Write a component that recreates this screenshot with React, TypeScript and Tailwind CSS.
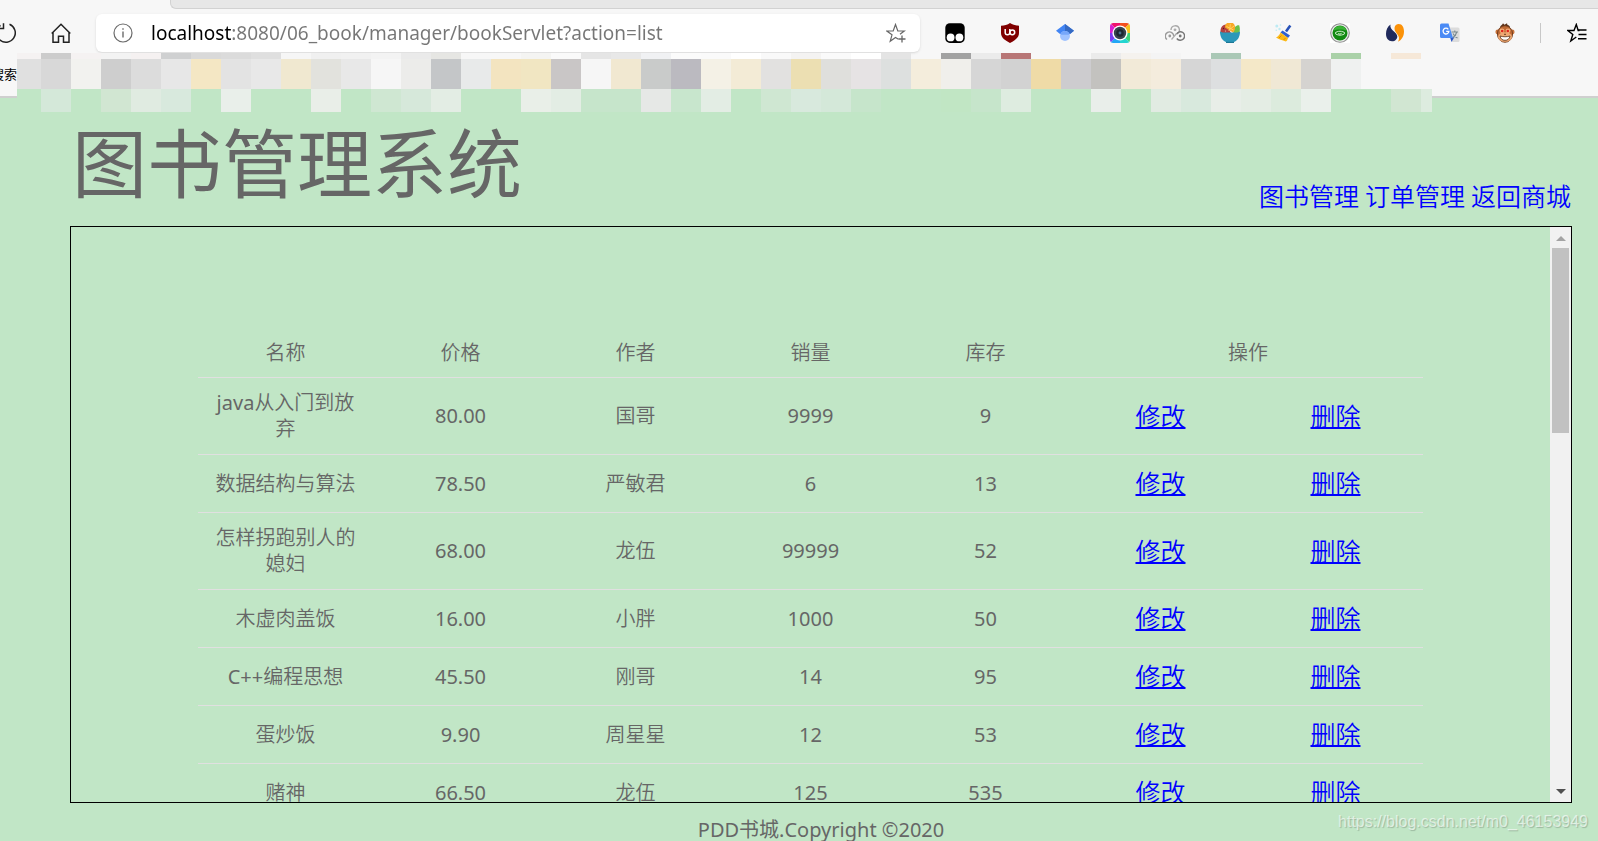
/**
 * Book manager page shown inside a browser window
 */

import { useRef, type ReactNode } from 'react';

interface Book {
  name: string;
  price: string;
  author: string;
  sales: number;
  stock: number;
}

const books: Book[] = [
  { name: 'java从入门到放弃', price: '80.00', author: '国哥', sales: 9999, stock: 9 },
  { name: '数据结构与算法', price: '78.50', author: '严敏君', sales: 6, stock: 13 },
  { name: '怎样拐跑别人的媳妇', price: '68.00', author: '龙伍', sales: 99999, stock: 52 },
  { name: '木虚肉盖饭', price: '16.00', author: '小胖', sales: 1000, stock: 50 },
  { name: 'C++编程思想', price: '45.50', author: '刚哥', sales: 14, stock: 95 },
  { name: '蛋炒饭', price: '9.90', author: '周星星', sales: 12, stock: 53 },
  { name: '赌神', price: '66.50', author: '龙伍', sales: 125, stock: 535 },
];

// Colours of the pixelated strip over the bookmarks bar, '-' is a see-through tile
const mosaicTop =
  'f5f2f2 cccccc f5f2f2 f3f3f3 f5f1f1 cfd0d1 d9d9d9 dbdbdb dfdfdf f6f6f6 f0f0f0 f1f1f1 f3f3f3 eaeaea e6e6e3 f7f7f7 f7f7f7 f4f4f2 fafafa e5e5e5 e8e8e8 f0f1f3 fbfbfb fafafa ffffff f9f9f9 f4f3f2 fafafa ffffff e4e4e4 - a2a2a2 ebebeb b87676 - - ebebeb f5f2ee f4f4f4 - aac8b6 - - - aad1a8 - f6e8d8 -'.split(' ');
const mosaicMiddle =
  'e0e0e0 d8d8d8 f2f2ef cecece dcdcdc e7e7e7 f4e7c4 e3e3e3 e8e8e8 f0e8d0 e2e2dd e8e8e8 f6f6f6 ececea c4c6c8 e8eaea f3e4c0 f1e6c2 c9c6c6 f6f6f6 f1e8d1 c9cbca bbbac0 f4f1e6 f3ebd6 e2e1e0 ecdfb2 dfdfdc e6e3e4 dde0df f4eddc f0efeb d6d6d6 d2d2d2 efdba7 cdcccf c3c2bf f2ead8 f4ecdd d6d6d6 dddfe0 f4e8c8 f0e8d5 d5d3d0 eff1f0 - - -'.split(' ');
const mosaicBottom =
  'c1e6c6 d4e8d9 c1e6c6 d1e6d2 e0ebe1 d8e9dd c1e6c6 e9efea c1e6c6 c1e6c6 e9eee8 c1e6c6 cfe7d2 d6e8da e3ede4 c1e6c6 c1e6c6 e9efe8 e3ede4 c6e5cb c6e5cb e6e8e6 c8e6cd e3ede4 c1e6c6 cfe7d2 d8e9dd d4e8d9 c6e5cb c1e6c6 c1e6c6 c1e6c4 c6e5cb deece0 c1e6c6 c1e6c6 e9eeea c1e6c6 e1ebe2 d8e9dd e8eee8 e4ede4 dcebdd eaf0eb c1e6c6 c1e6c6 d1e6d2 ddecdf'.split(' ');

function MosaicRow({ colors, className }: { colors: string[]; className: string }) {
  return (
    <div className={`flex ${className}`}>
      {colors.map((color, i) => (
        <span
          key={i}
          className="w-[30px] shrink-0 first:w-6 last:w-[11px]"
          style={{ backgroundColor: color === '-' ? 'transparent' : `#${color}` }}
        />
      ))}
    </div>
  );
}

function Icon({ children }: { children: ReactNode }) {
  return (
    <svg viewBox="0 0 20 20" className="size-5" fill="none" aria-hidden="true">
      {children}
    </svg>
  );
}

const extensions: { label: string; icon: ReactNode }[] = [
  {
    label: 'Tampermonkey',
    icon: (
      <Icon>
        <rect x="0.3" y="0.3" width="19.4" height="19.6" rx="4.5" fill="#000" />
        <circle cx="5.6" cy="14.4" r="3.9" fill="#fff" />
        <circle cx="14.4" cy="14.4" r="3.9" fill="#fff" />
      </Icon>
    ),
  },
  {
    label: 'uBlock Origin',
    icon: (
      <Icon>
        <path d="M10 0c2.5 1.8 5.5 2.5 9 2.7V10c0 5-4.5 7.500-9 10-4.500-2.500-9-5-9-10V2.700C4.500 2.500 7.500 1.800 10 0z" fill="#800000" />
        <path d="M5.200 6v3.400a2.300 2.300 0 0 0 4.600 0V6" stroke="#fff" strokeWidth="1.500" />
        <circle cx="12.300" cy="9.300" r="2.400" stroke="#fff" strokeWidth="1.500" />
      </Icon>
    ),
  },
  {
    label: 'Scholar',
    icon: (
      <Icon>
        <path d="M10 1l9 6.800-4 3.200H5L1 7.800z" fill="#4285f4" />
        <path d="M10 1l9 6.800-4 3.200-5-3z" fill="#356ac3" />
        <circle cx="10" cy="13" r="5" fill="#a0c3ff" />
        <path d="M5.400 11a5 5 0 0 1 9.200 0l-1 .8H6.400z" fill="#76a7fa" />
      </Icon>
    ),
  },
  {
    label: 'Screen capture',
    icon: (
      <Icon>
        <defs>
          <clipPath id="cam">
            <rect width="20" height="20" rx="3.5" />
          </clipPath>
        </defs>
        <g clipPath="url(#cam)">
          <path d="M10 10L0 0h10z" fill="#f0146e" />
          <path d="M10 10V0h10z" fill="#f4511e" />
          <path d="M10 10L20 0v10z" fill="#f6c21c" />
          <path d="M10 10h10v10z" fill="#3ed37a" />
          <path d="M10 10l10 10H10z" fill="#23d5d0" />
          <path d="M10 10v10H0z" fill="#22a7f5" />
          <path d="M10 10L0 20V10z" fill="#7a3cf2" />
          <path d="M10 10H0V0z" fill="#d91fd2" />
        </g>
        <circle cx="10" cy="10" r="7.6" fill="#fff" />
        <circle cx="10" cy="10" r="6.2" fill="#38444f" />
        <circle cx="10" cy="10" r="3.800" fill="#1c2731" />
        <circle cx="10" cy="10" r="1.400" fill="#4a6f8a" />
      </Icon>
    ),
  },
  {
    label: 'Cloud',
    icon: (
      <Icon>
        <path d="M2 16.500a4.200 4.200 0 1 1 6.700-3.300" stroke="#9a9a9a" strokeWidth="1.400" />
        <path d="M6 7a4.200 4.200 0 1 1 5.500 4" stroke="#a8a8a8" strokeWidth="1.400" />
        <path d="M11.500 11a4.300 4.300 0 1 1 .3 4.500" stroke="#777" strokeWidth="1.400" />
        <circle cx="4.800" cy="13" r="1.400" fill="#999" />
        <circle cx="10" cy="6.800" r="1.400" fill="#aaa" />
        <circle cx="15.200" cy="13" r="1.400" fill="#777" />
        <path d="M6.500 16.500l5-6" stroke="#aaa" strokeWidth="1.200" />
      </Icon>
    ),
  },
  {
    label: 'Salad',
    icon: (
      <Icon>
        <path d="M.5 10C0 5 2 2 6 1.500l5 8.500z" fill="#b5413f" />
        <path d="M13 10l2-6c1.500-1.500 3-2 4.300-1.500.7 3 .7 5 0 7.500z" fill="#6cc04a" />
        <path d="M5 4.500a5 5 0 0 1 10-.8c.3 2.500-.5 4.300-2 5.800z" fill="#f9a825" />
        <path d="M10.300 1.200l-.5 5.500M6.500 3.500l7 3.500M8.500 7.500l5.500-4.500" stroke="#ffd56b" strokeWidth="0.900" />
        <circle cx="3.500" cy="5.500" r=".7" fill="#5b1c1c" />
        <circle cx="5.500" cy="8" r=".6" fill="#f1c0b8" />
        <path d="M0 8.500c3 1.500 6 1 10 1s7 .5 10-1c0 6-3 9.500-6 10.500H6C3 18 0 14.500 0 8.500z" fill="#2b97b9" />
        <path d="M6 18.800h8v1.200H6z" fill="#1d7796" />
      </Icon>
    ),
  },
  {
    label: 'Cleaner',
    icon: (
      <Icon>
        <path d="M15.300 2.500L11 8.500" stroke="#2852b8" strokeWidth="2.600" />
        <path d="M7.500 7.500l7.500 5-2 2.500L5.500 9.500z" fill="#2f5fd0" />
        <path d="M5.500 9.500l7.500 5.500c-.5 2-1 3-2.200 3.500C7 17 4 16.500 1 14.500 3 13.500 4.500 12 5.500 9.500z" fill="#fbb917" />
        <path d="M4 15l2.500-2.500M8.500 17l2-2" stroke="#e58a00" strokeWidth="1" />
        <circle cx="1.800" cy="3" r="1.500" fill="#bdebf4" />
        <circle cx="4.500" cy="6" r="1.200" fill="#bdebf4" />
        <circle cx="5.500" cy="2" r=".8" fill="#bdebf4" />
        <circle cx="1.300" cy="7.300" r=".8" fill="#bdebf4" />
      </Icon>
    ),
  },
  {
    label: 'Eye guard',
    icon: (
      <Icon>
        <path d="M0 0h20v20H0z" fill="#fff" />
        <circle cx="10" cy="10" r="9.300" fill="#ececec" stroke="#8f8f8f" strokeWidth="1.100" />
        <circle cx="10" cy="10" r="7.500" fill="#128a12" />
        <path d="M3.500 7.500a7 7 0 0 1 13 0c-3-1.500-10-1.500-13 0z" fill="#3bb336" />
        <path d="M5 10.200c2-2.600 8-2.600 10 0-2 2.600-8 2.600-10 0z" stroke="#d5f2d0" strokeWidth="1" />
        <path d="M8 10.600c1.300.8 3.300.6 3.700-.8" stroke="#d5f2d0" strokeWidth="1" />
      </Icon>
    ),
  },
  {
    label: 'Swirl',
    icon: (
      <Icon>
        <path d="M5.500 1.500C2.500 3.500 1 7 1 10.800 1 15.500 3.500 18.300 7 18.300c3.300 0 5.300-2.300 5.300-4.800C12.300 9 4.200 7.500 5.500 1.500z" fill="#202a5c" />
        <path d="M9.500 5C9.800 2.500 11.500 1 13.800 1 17.200 1 19 4.500 19 8.500c0 5-2.500 8.500-6 10.300C16.800 12 9 10.500 9.500 5z" fill="#fb9209" />
      </Icon>
    ),
  },
  {
    label: 'Translate',
    icon: (
      <Icon>
        <path d="M7 4.500h11a1.500 1.500 0 0 1 1.500 1.500v11.500A1.500 1.500 0 0 1 18 19h-6z" fill="#dcdcdc" />
        <path d="M10 14h4.500L11.500 19z" fill="#2a56c6" />
        <path d="M11.500 9h6.500M14.800 7.500V9M16.800 9c-.8 3-2.500 4.800-4.300 6M13 10.500c1 2 2.500 3.500 4.500 4.500" stroke="#7a8a90" strokeWidth="1.100" />
        <path d="M1.500.5h7L13 15H1.500A1.500 1.500 0 0 1 0 13.500V2A1.500 1.500 0 0 1 1.500.5z" fill="#4b8bf5" />
        <path d="M8.300 6.300A2.900 2.900 0 1 0 8.900 8.300H6.200" stroke="#fff" strokeWidth="1.300" />
      </Icon>
    ),
  },
  {
    label: 'Monkey',
    icon: (
      <Icon>
        <circle cx="2.800" cy="9" r="2.400" fill="#c9743c" />
        <circle cx="17.200" cy="9" r="2.400" fill="#c9743c" />
        <path d="M5 4C6 2 7.500 2 8 .3l1.500 1.500L12 .3l.5 1.700c1.500 0 2 1 2.500 2z" fill="#5b3118" />
        <ellipse cx="10" cy="11" rx="7.600" ry="8.300" fill="#c06a34" stroke="#6b3a1c" strokeWidth="0.900" />
        <ellipse cx="10" cy="14" rx="7" ry="4.800" fill="#eda873" />
        <circle cx="7" cy="7.800" r="2.400" fill="#f2b27c" />
        <circle cx="13" cy="7.800" r="2.400" fill="#f2b27c" />
        <circle cx="7.200" cy="8" r="1.300" fill="#e0231c" />
        <circle cx="12.800" cy="8" r="1.300" fill="#e0231c" />
        <path d="M5 13c2.500 1 7.500 1 10 0-.5 3-2.500 4.300-5 4.300S5.500 16 5 13z" fill="#fff" stroke="#5b3118" strokeWidth="0.800" />
        <path d="M9 11.300h2" stroke="#5b3118" strokeWidth="0.900" />
      </Icon>
    ),
  },
];

function BrowserBar() {
  return (
    <header className="relative shrink-0 border-b-2 border-[#cfcfcf] bg-[#f7f7f7]">
      <div className="ml-[170px] h-[9px] rounded-bl-md border-b border-l border-[#d2d2d2] bg-[#e7e7e7]" />
      <div className="flex h-11 items-center pt-1">
        <button type="button" aria-label="Reload" className="w-4 shrink-0 overflow-hidden">
          <svg viewBox="0 0 20 20" className="-ml-1 size-5" fill="none" stroke="#222" strokeWidth="1.500">
            <path d="M13.500 1.300A9.300 9.300 0 1 1 4.500 2.400M7.500.2v5.300H2.300" />
          </svg>
        </button>
        <button type="button" aria-label="Home" className="ml-[35px] shrink-0">
          <Icon>
            <path d="M2 9.500v9.700h5.500v-6h5v6H18V9.500M.7 10.500L10 1.200l9.300 9.300" stroke="#222" strokeWidth="1.500" />
          </Icon>
        </button>
        <div className="ml-[25px] flex h-[38px] min-w-0 flex-1 items-center rounded-md bg-white pr-[14px] pl-[17px] shadow-sm">
          <svg viewBox="0 0 20 20" className="size-5 shrink-0" fill="none" stroke="#6b6b6b" strokeWidth="1.200">
            <circle cx="10" cy="10" r="9" />
            <path d="M10 8.500v6M10 5.200v1.600" strokeWidth="1.400" />
          </svg>
          <input
            aria-label="Address"
            defaultValue="localhost:8080/06_book/manager/bookServlet?action=list"
            className="ml-[18px] min-w-0 flex-1 bg-[linear-gradient(to_right,#000_80px,#767676_80px)] bg-clip-text text-[19px] leading-7 text-transparent outline-none"
          />
          <button type="button" aria-label="Add to favorites" className="shrink-0">
            <Icon>
              <path d="M12.500 16.300l-3-1.800-5.300 3.800 1.800-6.500L.8 8h6.400L9.500 1.500 11.800 8h6.500l-4.300 3.300" stroke="#666" strokeWidth="1.200" />
              <path d="M16 12.500v7M12.500 16h7" stroke="#666" strokeWidth="1.300" />
            </Icon>
          </button>
        </div>
        <div className="ml-[7px] flex shrink-0">
          {extensions.map((ext) => (
            <button key={ext.label} type="button" aria-label={ext.label} className="flex w-[55px] justify-center">
              {ext.icon}
            </button>
          ))}
        </div>
        <span className="ml-2 h-5 w-px shrink-0 bg-[#c8c8c8]" />
        <button type="button" aria-label="Favorites" className="mr-[11px] ml-[26px] shrink-0">
          <Icon>
            <path d="M11 7h8.500M11.500 11.500h8M11 15.800h8.500" stroke="#000" strokeWidth="1.400" />
            <path d="M12.500 7.500h-1.300L9.300 1.500 7 7.500H.8l5 4-2 6.500 5.500-4" stroke="#000" strokeWidth="1.400" />
          </Icon>
        </button>
      </div>
      <div className="flex h-[43px] items-center">
        <div className="flex w-[17px] justify-end overflow-hidden text-[13px] whitespace-nowrap text-black">搜索</div>
      </div>
      {/* censored bookmarks, spills over the top of the page */}
      <div className="absolute top-[53px] left-[17px]">
        <MosaicRow colors={mosaicTop} className="h-1.5" />
        <MosaicRow colors={mosaicMiddle} className="h-[30px]" />
        <MosaicRow colors={mosaicBottom} className="h-[23px]" />
      </div>
    </header>
  );
}

// Latin letters keep the normal weight next to the thinner Chinese ones
function BookName({ name }: { name: string }) {
  const latin = name.match(/^[\w+]+/)?.[0] ?? '';
  return (
    <>
      {latin && <span className="font-normal">{latin}</span>}
      {name.slice(latin.length)}
    </>
  );
}

function BookTable() {
  return (
    <table className="mx-auto mt-[100px] w-full max-w-[1225px] table-fixed border-collapse text-center text-xl leading-[26px]">
      <thead>
        <tr className="border-b border-[#e0e0e0]">
          {['名称', '价格', '作者', '销量', '库存'].map((title) => (
            <th key={title} scope="col" className="px-3 pt-[13px] pb-[11px] font-[350]">
              {title}
            </th>
          ))}
          <th scope="colgroup" colSpan={2} className="px-3 pt-[13px] pb-[11px] font-[350]">
            操作
          </th>
        </tr>
      </thead>
      <tbody>
        {books.map((book) => (
          <tr key={book.name} className="border-b border-[#e0e0e0]">
            <td className="px-3 py-3 font-[350]">
              <BookName name={book.name} />
            </td>
            <td className="px-3 py-3">{book.price}</td>
            <td className="px-3 py-3 font-[350]">{book.author}</td>
            <td className="px-3 py-3">{book.sales}</td>
            <td className="px-3 py-3">{book.stock}</td>
            <td className="px-3 py-3 text-[25px] leading-[33px] font-[350]">
              <a href="#edit" className="text-[#00f] underline decoration-2 underline-offset-1">修改</a>
            </td>
            <td className="px-3 py-3 text-[25px] leading-[33px] font-[350]">
              <a href="#delete" className="text-[#00f] underline decoration-2 underline-offset-1">删除</a>
            </td>
          </tr>
        ))}
      </tbody>
    </table>
  );
}

export default function App() {
  const scrollRef = useRef<HTMLDivElement>(null);

  const scroll = (top: number) => {
    scrollRef.current?.scrollBy({ top });
  };

  return (
    <div className="relative flex h-screen flex-col overflow-hidden bg-[#c1e6c6] font-['Noto_Sans','Noto_Sans_CJK_SC',sans-serif] text-[#666]">
      <BrowserBar />

      <div className="mr-[26px] ml-[70px] flex h-32 shrink-0 items-end justify-between">
        <h1 className="pb-[13px] pl-0.5 text-[75px] leading-[100px]">图书管理系统</h1>
        <nav className="flex gap-[6px] pr-px pb-[13px] text-[25px] leading-[33px] font-[350] text-[#00f]">
          <a href="#books">图书管理</a>
          <a href="#orders">订单管理</a>
          <a href="#home">返回商城</a>
        </nav>
      </div>

      <main className="mr-[26px] ml-[70px] flex min-h-0 flex-1 border border-black">
        <div ref={scrollRef} className="min-w-0 flex-1 overflow-y-auto [scrollbar-width:none]">
          <BookTable />
        </div>
        <div className="flex w-[21px] shrink-0 flex-col bg-[#f1f1f1]">
          <button type="button" aria-label="Scroll up" onClick={() => scroll(-60)} className="flex h-[21px] items-center justify-center">
            <svg viewBox="0 0 10 5" className="mt-0.5 h-[5px] w-[10px]" fill="#a3a3a3">
              <path d="M5 0l5 5H0z" />
            </svg>
          </button>
          <div className="min-h-0 flex-1 px-0.5">
            <div className="h-[185px] bg-[#c1c1c1]" />
          </div>
          <button type="button" aria-label="Scroll down" onClick={() => scroll(60)} className="flex h-[21px] items-center justify-center">
            <svg viewBox="0 0 10 5" className="h-[5px] w-[10px]" fill="#505050">
              <path d="M0 0h10L5 5z" />
            </svg>
          </button>
        </div>
      </main>

      <footer className="mr-[26px] ml-[70px] h-[38px] shrink-0 pt-[14px] text-center text-xl leading-[26px]">
        PDD书城.Copyright ©2020
      </footer>

      <span className="absolute right-[10px] bottom-[7px] font-['Liberation_Sans',sans-serif] text-base leading-6 text-white/60 [text-shadow:1px_1px_1px_rgba(0,0,0,0.2)]">
        https://blog.csdn.net/m0_46153949
      </span>
    </div>
  );
}
